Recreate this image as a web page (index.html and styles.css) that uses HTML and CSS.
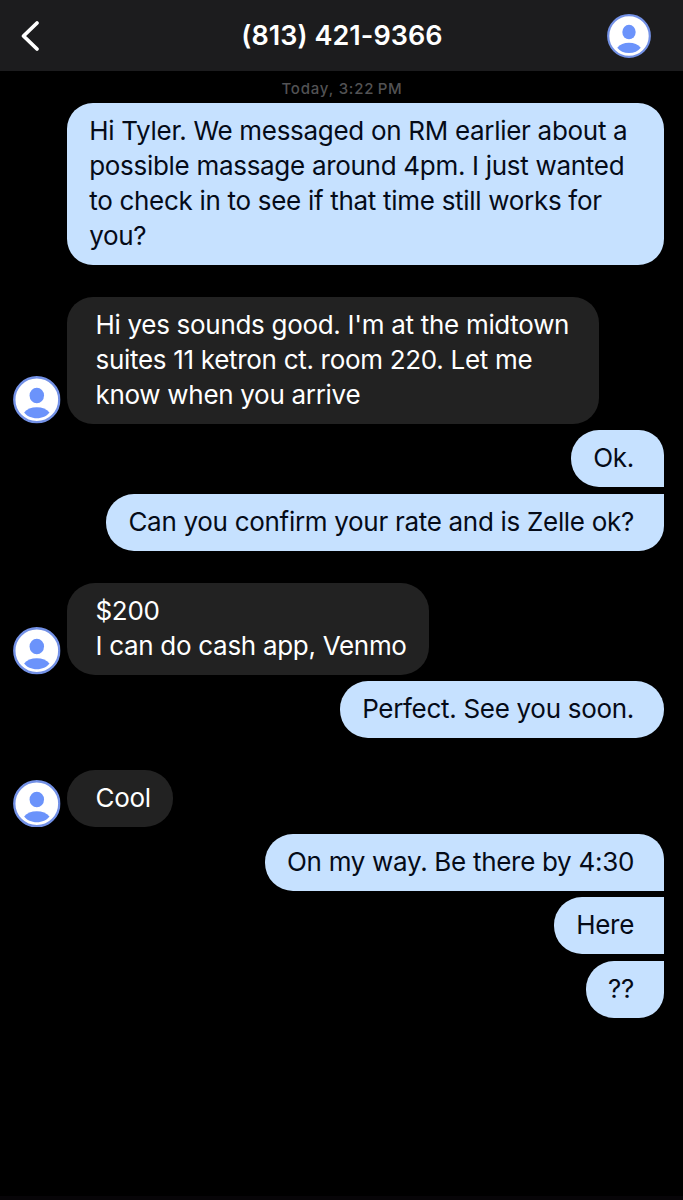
FILE: index.html
```html
<!DOCTYPE html>
<html lang="en">
<head>
  <meta charset="UTF-8" />
  <meta name="viewport" content="width=device-width, initial-scale=1.0" />
  <title>(813) 421-9366</title>
  <link rel="stylesheet" href="styles.css">
</head>
<body>
  <svg class="defs" aria-hidden="true">
    <symbol id="person" viewBox="0 0 48 48">
      <circle cx="24" cy="24" r="22.700" fill="#fff" stroke="#7391e6" stroke-width="2.400" />
      <ellipse cx="24" cy="19.700" rx="7.300" ry="7.900" fill="#6b93fb" />
      <path d="M11.200 36.800C14 33.200 18.600 31.400 24 31.400s10 1.800 12.800 5.400C34 40.400 29.500 42.600 24 42.600s-10-2.200-12.800-5.800z" fill="#6b93fb" />
    </symbol>
  </svg>

  <div class="chat-header">
    <button class="back" aria-label="Back">
      <svg viewBox="0 0 20 32"><path d="M17 3 3.500 16 17 29" /></svg>
    </button>
    <h1>(813) 421-9366</h1>
    <svg class="contact"><use href="#person" /></svg>
  </div>

  <div class="chat-window">
    <div class="timestamp">Today, 3:22&#8239;PM</div>

    <div class="row sent">
      <div class="message long">Hi Tyler. We messaged on RM earlier about a<br>possible massage around 4pm. I just wanted<br>to check in to see if that time still works for<br>you?</div>
    </div>

    <div class="row received">
      <svg class="avatar"><use href="#person" /></svg>
      <div class="message long">Hi yes sounds good. I'm at the midtown<br>suites 11 ketron ct. room 220. Let me<br>know when you arrive</div>
    </div>

    <div class="row sent">
      <div class="message first">Ok.</div>
      <div class="message last">Can you confirm your rate and is Zelle ok?</div>
    </div>

    <div class="row received">
      <svg class="avatar"><use href="#person" /></svg>
      <div class="message">$200<br>I can do cash app, Venmo</div>
    </div>

    <div class="row sent">
      <div class="message">Perfect. See you soon.</div>
    </div>

    <div class="row received">
      <svg class="avatar"><use href="#person" /></svg>
      <div class="message">Cool</div>
    </div>

    <div class="row sent">
      <div class="message first">On my way. Be there by 4:30</div>
      <div class="message middle">Here</div>
      <div class="message last">??</div>
    </div>
  </div>

  <div class="bottom-bar"></div>
</body>
</html>
```
FILE: styles.css
```css
:root {
  --header-bg: #1c1c1e;
  --sent-bg: #c6e1ff;
  --received-bg: #222222;
}

body {
  margin: 0;
  background-color: #000;
  font-family: Inter, 'Liberation Sans', sans-serif;
  height: 100vh;
  display: flex;
  flex-direction: column;
  overflow: hidden;
}

.defs {
  display: none;
}

.chat-header {
  display: grid;
  grid-template-columns: 44px 1fr 44px;
  align-items: center;
  height: 71px;
  padding: 0 32px 0 20px;
  box-sizing: border-box;
  background-color: var(--header-bg);
  color: #fff;
}

.chat-header h1 {
  margin: 0;
  padding-left: 13px;
  font-size: 27px;
  font-weight: 600;
  line-height: 32px;
  letter-spacing: 0.05px;
  text-align: center;
}

.back {
  padding: 0;
  border: none;
  background: none;
  display: flex;
}

.back svg {
  width: 20px;
  height: 32px;
  fill: none;
  stroke: #fff;
  stroke-width: 3.8;
  stroke-linecap: round;
  stroke-linejoin: round;
}

.contact {
  width: 44px;
  height: 44px;
}

.chat-window {
  flex: 1;
  padding: 8px 19px 0 13px;
}

.timestamp {
  height: 20px;
  margin-bottom: 4px;
  padding-left: 7px;
  line-height: 20px;
  font-size: 15px;
  font-weight: 500;
  letter-spacing: 0.8px;
  text-align: center;
  color: #525254;
}

.row {
  display: flex;
}

.sent {
  flex-direction: column;
  align-items: flex-end;
  gap: 6.6px;
  margin-bottom: 31.8px;
}

.received {
  align-items: flex-end;
  gap: 6.4px;
  margin-bottom: 6.6px;
}

.avatar {
  width: 47.6px;
  height: 47.6px;
}

.message {
  padding: 10px 30px 12px 22.4px;
  border-radius: 28px;
  font-size: 26px;
  line-height: 35px;
  letter-spacing: -0.3px;
  white-space: nowrap;
}

.sent .message {
  background-color: var(--sent-bg);
  color: #050b18;
}

.received .message {
  padding: 10px 22.5px 12px 28.5px;
  background-color: var(--received-bg);
  color: #fff;
}

.message.long {
  border-radius: 26px;
}

.sent .long {
  padding-right: 37px;
}

.received .message.long {
  padding-right: 30px;
}

.sent .message.long {
  padding-right: 36.6px;
}

.sent .first {
  border-radius: 28px 25px 0 28px;
}

.sent .middle {
  border-radius: 28px 0 0 28px;
}

.sent .last {
  border-radius: 28px 0 25px 28px;
}

.bottom-bar {
  height: 4px;
  background-color: #070508;
}
```
